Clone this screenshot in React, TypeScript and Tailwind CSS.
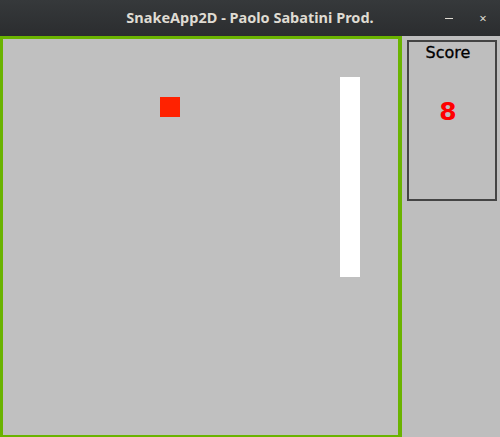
export default function App() {
  return (
    <div className="w-[500px] h-[437px] overflow-hidden flex flex-col bg-[#bebebe] font-['Noto_Sans',sans-serif]">
      {/* title bar */}
      <div className="h-[36px] shrink-0 bg-gradient-to-b from-[#36393b] to-[#2b2d2f] flex items-center relative">
        <div className="flex-1 text-center text-[14.5px] font-bold text-[#dfdbd2]">
          SnakeApp2D - Paolo Sabatini Prod.
        </div>
        <div className="absolute right-0 top-0 h-full flex items-center text-[#dfdbd2]">
          <span className="w-[34px] flex justify-center">
            <span className="block w-[8px] h-[1px] bg-[#dfdbd2]" />
          </span>
          <span className="w-[34px] flex justify-center text-[13px] leading-none">×</span>
        </div>
      </div>

      <div className="flex flex-1">
        {/* game board */}
        <div className="w-[402px] h-[402px] shrink-0 border-l-[3px] border-t-[3px] border-b-[3px] border-r-[4px] border-[#6ab300] bg-[#c0c0c0] relative">
          <div className="absolute left-[157px] top-[58px] w-[20px] h-[20px] bg-[#ff2200]" />
          <div className="absolute left-[337px] top-[38px] w-[20px] h-[200px] bg-white" />
        </div>

        {/* side panel */}
        <div className="flex-1 pl-[5px] pr-[3px] pt-[4px]">
          <div className="h-[161px] border-2 border-[#444444] flex flex-col items-center pr-[8px] font-['DejaVu_Sans',sans-serif]">
            <div className="mt-[1px] text-[16px] leading-[20px] text-black [-webkit-text-stroke:0.3px_black]">Score</div>
            <div className="mt-[36px] text-[25px] font-bold leading-none text-[#ff0000]">8</div>
          </div>
        </div>
      </div>
    </div>
  );
}
